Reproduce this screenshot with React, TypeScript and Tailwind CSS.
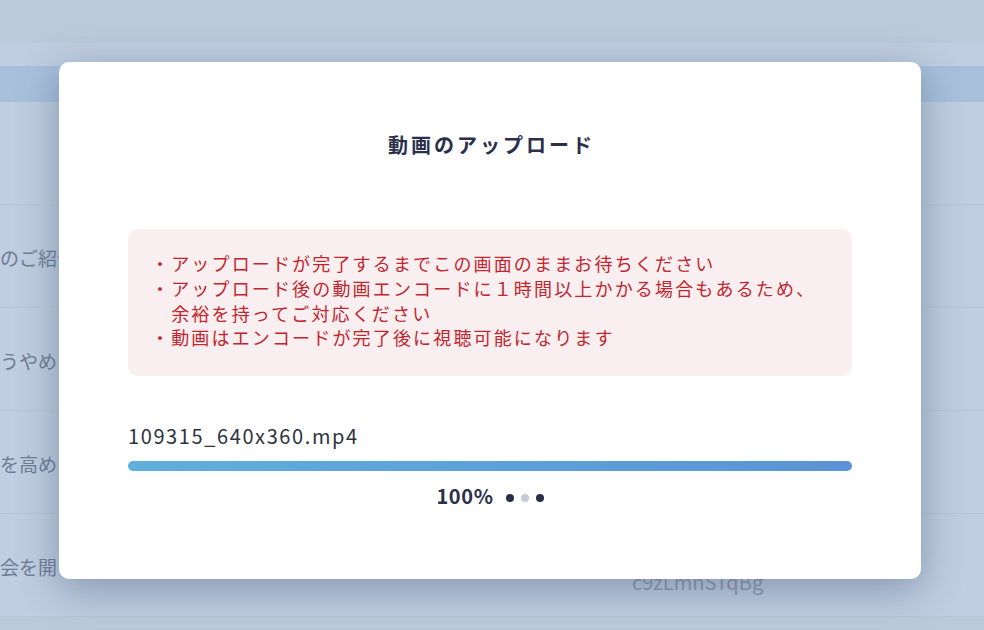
const rows = [
  { left: "のご紹介", right: "" },
  { left: "うやめ", right: "" },
  { left: "を高め", right: "" },
  { left: "会を開", right: "c9zLmnSTqBg" },
];

const font = { fontFamily: '"Noto Sans CJK JP", "Noto Sans", sans-serif' };

const App = () => {
  return (
    <div
      className="relative h-[630px] w-[984px] overflow-hidden bg-[#bbcadb]"
      style={font}
    >
      {/* page behind the overlay */}
      <div className="h-[43px] bg-[#bbcadb]" />
      <div className="h-[23px] bg-[#bfcee0]" />
      <div className="h-[36px] bg-[#a8c0dc]" />
      <div className="h-[103px] border-b border-[#b6c6d8] bg-[#bfcee0]" />
      {rows.map((row, i) => (
        <div
          key={i}
          className="relative flex h-[103px] items-center border-b border-[#b6c6d8] bg-[#bfcee0] pt-[4px]"
        >
          <span className="whitespace-nowrap text-[19px] text-[#6e7d97]">
            {row.left}
          </span>
          {row.right && (
            <span className="absolute left-[632px] top-[53px] text-[20px] text-[#8d9bb0]">
              {row.right}
            </span>
          )}
        </div>
      ))}

      {/* upload modal */}
      <div className="absolute left-[59px] top-[62px] flex h-[517px] w-[862px] flex-col rounded-[10px] bg-white px-[69px] pt-[69px] shadow-[0_10px_40px_rgba(60,80,110,0.45)]">
        <h2 className="pl-[0.15em] text-center text-[20px] font-bold leading-[28px] tracking-[0.15em] text-[#2b2f4d]">
          動画のアップロード
        </h2>

        <div className="mt-[70px] rounded-[10px] bg-[#f9eef0] px-[23px] pb-[26px] pt-[22px] text-[18px] leading-[24.75px] tracking-[0.12em] text-[#c1262e]">
          <div className="flex">
            <span className="w-[1.12em] shrink-0">・</span>
            <span>アップロードが完了するまでこの画面のままお待ちください</span>
          </div>
          <div className="flex">
            <span className="w-[1.12em] shrink-0">・</span>
            <span>
              アップロード後の動画エンコードに１時間以上かかる場合もあるため、
              <br />
              余裕を持ってご対応ください
            </span>
          </div>
          <div className="flex">
            <span className="w-[1.12em] shrink-0">・</span>
            <span>動画はエンコードが完了後に視聴可能になります</span>
          </div>
        </div>

        <div className="mt-[46px] text-[20px] leading-[28px] tracking-[0.08em] text-[#2f3240]">
          109315_640x360.mp4
        </div>
        <div className="mt-[11px] h-[10px] w-full rounded-full bg-gradient-to-r from-[#5fb0da] to-[#5a93d7]" />

        <div className="mt-[11px] flex items-center justify-center gap-[12px]">
          <span className="text-[20px] font-bold leading-[28px] tracking-[0.03em] text-[#2a2f4a]">
            100%
          </span>
          <div className="flex items-center gap-[7px] pt-[3px]">
            <span className="h-[8px] w-[8px] rounded-full bg-[#2a2f4a]" />
            <span className="h-[8px] w-[8px] rounded-full bg-[#c5cad6]" />
            <span className="h-[8px] w-[8px] rounded-full bg-[#2a2f4a]" />
          </div>
        </div>
      </div>
    </div>
  );
};

export default App;
